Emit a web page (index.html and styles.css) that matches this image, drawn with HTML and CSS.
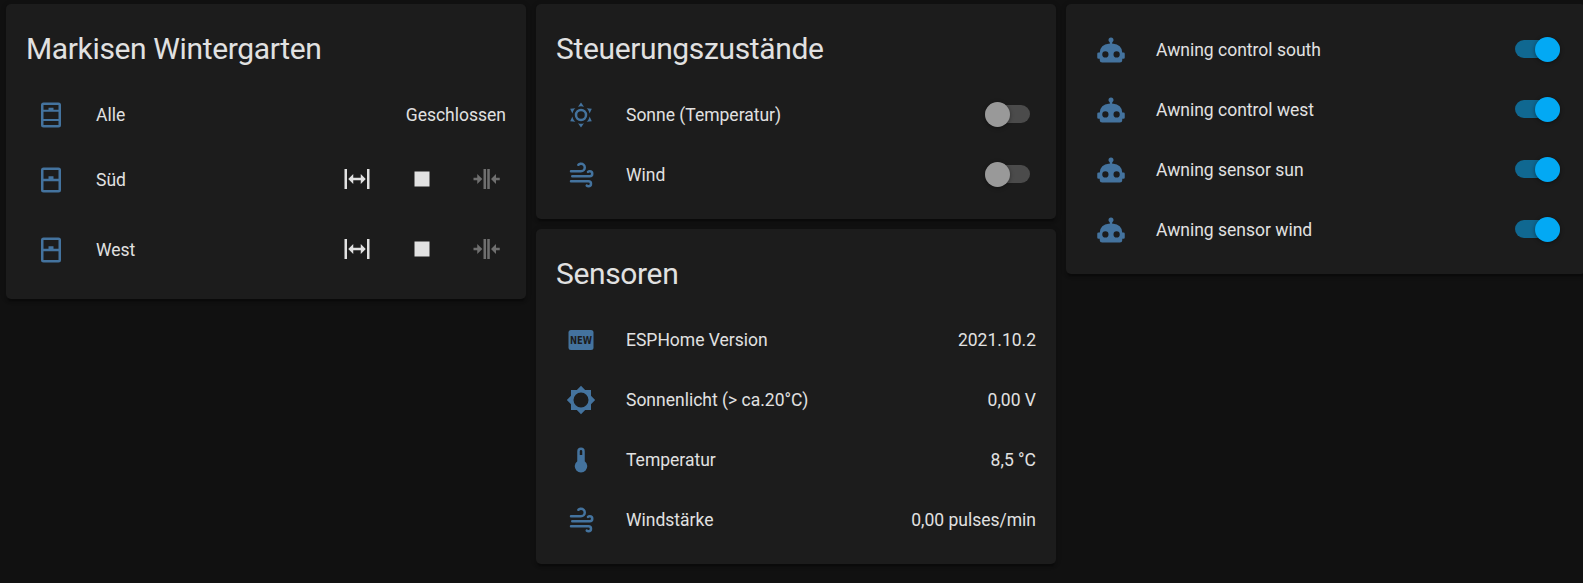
FILE: index.html
```
<!DOCTYPE html>
<html lang="de">
<head>
<meta charset="utf-8">
<title>Markisen</title>
<link rel="stylesheet" href="styles.css">
</head>
<body>
<svg class="defs" aria-hidden="true">
  <symbol id="group" viewBox="0 0 24 24"><path d="M6,2H18A2,2 0 0,1 20,4V20A2,2 0 0,1 18,22H6A2,2 0 0,1 4,20V4A2,2 0 0,1 6,2M6,4V7.7H10V6.2H14V7.7H18V4H6M6,9.3V15.2H18V9.3H6M6,16.8V20H18V16.8H6Z"/></symbol>
  <symbol id="window" viewBox="0 0 24 24"><path d="M6,11H10V9H14V11H18V4H6V11M18,13H6V20H18V13M6,22A2,2 0 0,1 4,20V4A2,2 0 0,1 6,2H18A2,2 0 0,1 20,4V20A2,2 0 0,1 18,22H6Z"/></symbol>
  <symbol id="expand" viewBox="0 0 24 24"><path d="M9,11H15V8L19,12L15,16V13H9V16L5,12L9,8V11M2,20V4H4V20H2M20,20V4H22V20H20Z"/></symbol>
  <symbol id="stop" viewBox="0 0 24 24"><path d="M18,18H6V6H18V18Z"/></symbol>
  <symbol id="collapse" viewBox="0 0 24 24"><path d="M13,20V4H15.03V20H13M10,20V4H12.03V20H10M5,8L9.03,12L5,16V13H2V11H5V8M20,16L16,12L20,8V11H23V13H20V16Z"/></symbol>
  <symbol id="sun" viewBox="0 0 24 24"><path d="M12,7A5,5 0 0,1 17,12A5,5 0 0,1 12,17A5,5 0 0,1 7,12A5,5 0 0,1 12,7M12,9A3,3 0 0,0 9,12A3,3 0 0,0 12,15A3,3 0 0,0 15,12A3,3 0 0,0 12,9M12,2L14.39,5.42C13.65,5.15 12.84,5 12,5C11.16,5 10.35,5.15 9.61,5.42L12,2M3.34,7L7.5,6.65C6.9,7.16 6.36,7.78 5.94,8.5C5.5,9.24 5.25,10 5.11,10.79L3.34,7M3.36,17L5.12,13.23C5.26,14 5.53,14.78 5.95,15.5C6.37,16.24 6.91,16.86 7.5,17.37L3.36,17M20.65,7L18.88,10.79C18.74,10 18.47,9.23 18.05,8.5C17.63,7.78 17.1,7.15 16.5,6.64L20.65,7M20.64,17L16.5,17.36C17.09,16.85 17.62,16.22 18.04,15.5C18.46,14.77 18.73,14 18.87,13.21L20.64,17M12,22L9.59,18.56C10.33,18.83 11.14,19 12,19C12.82,19 13.63,18.83 14.37,18.56L12,22Z"/></symbol>
  <symbol id="wind" viewBox="0 0 24 24"><path d="M4,10A1,1 0 0,1 3,9A1,1 0 0,1 4,8H12A2,2 0 0,0 14,6A2,2 0 0,0 12,4C11.45,4 10.95,4.22 10.59,4.59C10.2,5 9.56,5 9.17,4.59C8.78,4.2 8.78,3.56 9.17,3.17C9.9,2.45 10.9,2 12,2A4,4 0 0,1 16,6A4,4 0 0,1 12,10H4M19,12A1,1 0 0,0 20,11A1,1 0 0,0 19,10C18.72,10 18.47,10.11 18.29,10.29C17.9,10.68 17.27,10.68 16.88,10.29C16.5,9.9 16.5,9.27 16.88,8.88C17.42,8.34 18.17,8 19,8A3,3 0 0,1 22,11A3,3 0 0,1 19,14H5A1,1 0 0,1 4,13A1,1 0 0,1 5,12H19M18,18H4A1,1 0 0,1 3,17A1,1 0 0,1 4,16H18A3,3 0 0,1 21,19A3,3 0 0,1 18,22C17.17,22 16.42,21.66 15.88,21.12C15.5,20.73 15.5,20.1 15.88,19.71C16.27,19.32 16.9,19.32 17.29,19.71C17.47,19.89 17.72,20 18,20A1,1 0 0,0 19,19A1,1 0 0,0 18,18Z"/></symbol>
  <symbol id="brightness" viewBox="0 0 24 24"><path d="M12,18A6,6 0 0,1 6,12A6,6 0 0,1 12,6A6,6 0 0,1 18,12A6,6 0 0,1 12,18M20,15.31L23.31,12L20,8.69V4H15.31L12,0.69L8.69,4H4V8.69L0.69,12L4,15.31V20H8.69L12,23.31L15.31,20H20V15.31Z"/></symbol>
  <symbol id="thermometer" viewBox="0 0 24 24"><path d="M15 13V5A3 3 0 0 0 9 5V13A5 5 0 1 0 15 13M12 4A1 1 0 0 1 13 5V8H11V5A1 1 0 0 1 12 4Z"/></symbol>
  <symbol id="robot" viewBox="0 0 24 24"><path d="M12,2A2,2 0 0,1 14,4C14,4.74 13.6,5.39 13,5.73V7H14A7,7 0 0,1 21,14H22A1,1 0 0,1 23,15V18A1,1 0 0,1 22,19H21V20A2,2 0 0,1 19,22H5A2,2 0 0,1 3,20V19H2A1,1 0 0,1 1,18V15A1,1 0 0,1 2,14H3A7,7 0 0,1 10,7H11V5.73C10.4,5.39 10,4.74 10,4A2,2 0 0,1 12,2M7.5,13A2.5,2.5 0 0,0 5,15.5A2.5,2.5 0 0,0 7.5,18A2.5,2.5 0 0,0 10,15.5A2.5,2.5 0 0,0 7.5,13M16.5,13A2.5,2.5 0 0,0 14,15.5A2.5,2.5 0 0,0 16.5,18A2.5,2.5 0 0,0 19,15.5A2.5,2.5 0 0,0 16.5,13Z"/></symbol>
</svg>

<main class="columns">
  <div class="column">
    <section class="card">
      <h1 class="card-title">Markisen Wintergarten</h1>
      <div class="rows">
        <div class="row">
          <span class="badge"><svg class="icon"><use href="#group"/></svg></span>
          <span class="name">Alle</span>
          <span class="value">Geschlossen</span>
        </div>
        <div class="row row-cover">
          <span class="badge"><svg class="icon"><use href="#window"/></svg></span>
          <span class="name">Süd</span>
          <div class="controls">
            <button class="control" aria-label="Öffnen"><svg class="icon"><use href="#expand"/></svg></button>
            <button class="control" aria-label="Stopp"><svg class="icon"><use href="#stop"/></svg></button>
            <button class="control" aria-label="Schließen" disabled><svg class="icon"><use href="#collapse"/></svg></button>
          </div>
        </div>
        <div class="row row-cover">
          <span class="badge"><svg class="icon"><use href="#window"/></svg></span>
          <span class="name">West</span>
          <div class="controls">
            <button class="control" aria-label="Öffnen"><svg class="icon"><use href="#expand"/></svg></button>
            <button class="control" aria-label="Stopp"><svg class="icon"><use href="#stop"/></svg></button>
            <button class="control" aria-label="Schließen" disabled><svg class="icon"><use href="#collapse"/></svg></button>
          </div>
        </div>
      </div>
    </section>
  </div>

  <div class="column">
    <section class="card">
      <h1 class="card-title">Steuerungszustände</h1>
      <div class="rows">
        <div class="row">
          <span class="badge"><svg class="icon"><use href="#sun"/></svg></span>
          <span class="name">Sonne (Temperatur)</span>
          <span class="toggle"><span class="thumb"></span></span>
        </div>
        <div class="row">
          <span class="badge"><svg class="icon"><use href="#wind"/></svg></span>
          <span class="name">Wind</span>
          <span class="toggle"><span class="thumb"></span></span>
        </div>
      </div>
    </section>

    <section class="card">
      <h1 class="card-title">Sensoren</h1>
      <div class="rows">
        <div class="row">
          <span class="badge"><svg class="icon" viewBox="0 0 24 24"><rect x="2" y="4" width="20" height="16" rx="2"/><text class="new-label" x="3.2" y="15" textLength="17.6" lengthAdjust="spacingAndGlyphs">NEW</text></svg></span>
          <span class="name">ESPHome Version</span>
          <span class="value">2021.10.2</span>
        </div>
        <div class="row">
          <span class="badge"><svg class="icon"><use href="#brightness"/></svg></span>
          <span class="name">Sonnenlicht (&gt; ca.20°C)</span>
          <span class="value">0,00 V</span>
        </div>
        <div class="row">
          <span class="badge"><svg class="icon"><use href="#thermometer"/></svg></span>
          <span class="name">Temperatur</span>
          <span class="value">8,5 °C</span>
        </div>
        <div class="row">
          <span class="badge"><svg class="icon"><use href="#wind"/></svg></span>
          <span class="name">Windstärke</span>
          <span class="value">0,00 pulses/min</span>
        </div>
      </div>
    </section>
  </div>

  <div class="column">
    <section class="card">
      <div class="rows rows-untitled">
        <div class="row">
          <span class="badge"><svg class="icon"><use href="#robot"/></svg></span>
          <span class="name">Awning control south</span>
          <span class="toggle toggle-on"><span class="thumb"></span></span>
        </div>
        <div class="row">
          <span class="badge"><svg class="icon"><use href="#robot"/></svg></span>
          <span class="name">Awning control west</span>
          <span class="toggle toggle-on"><span class="thumb"></span></span>
        </div>
        <div class="row">
          <span class="badge"><svg class="icon"><use href="#robot"/></svg></span>
          <span class="name">Awning sensor sun</span>
          <span class="toggle toggle-on"><span class="thumb"></span></span>
        </div>
        <div class="row">
          <span class="badge"><svg class="icon"><use href="#robot"/></svg></span>
          <span class="name">Awning sensor wind</span>
          <span class="toggle toggle-on"><span class="thumb"></span></span>
        </div>
      </div>
    </section>
  </div>
</main>
</body>
</html>
```

FILE: styles.css
```
* { box-sizing: border-box; }

html { background: #111111; }

body {
  margin: 0;
  height: 583px;
  overflow: hidden;
  background: #111111;
  color: #e1e1e1;
  font-family: Roboto, "Noto Sans", sans-serif;
  font-size: 17.5px;
  line-height: 25px;
}

.defs {
  display: none;
}

.columns {
  display: grid;
  grid-template-columns: repeat(3, 520px);
  gap: 10px;
  align-items: start;
  padding: 4px 6px;
}

.column {
  display: flex;
  flex-direction: column;
  gap: 10px;
}

.card {
  background: #1c1c1c;
  border-radius: 5px;
  box-shadow: 0 2.5px 2.5px 0 rgba(0, 0, 0, 0.14), 0 1px 6px 0 rgba(0, 0, 0, 0.12), 0 4px 1px -2.5px rgba(0, 0, 0, 0.2);
}

.card-title {
  margin: 0;
  padding: 15px 20px 10px;
  font-size: 30px;
  font-weight: 400;
  line-height: 60px;
  letter-spacing: -0.012em;
}

.rows {
  display: flex;
  flex-direction: column;
  gap: 10px;
  padding: 0 20px 20px;
}

.rows-untitled { padding-top: 20px; }

.row {
  display: flex;
  align-items: center;
  height: 50px;
}

.row-cover { height: 60px; }

.badge {
  display: flex;
  align-items: center;
  justify-content: center;
  width: 50px;
  height: 50px;
  padding-top: 2px;
  color: #44739e;
}

.icon {
  display: block;
  width: 30px;
  height: 30px;
  fill: currentColor;
}

.new-label {
  fill: #1c1c1c;
  font-family: "DejaVu Sans", sans-serif;
  font-size: 8.2px;
  font-weight: 700;
}

.name {
  flex: 1;
  padding: 2px 0 0 20px;
}

.value { padding-top: 2px; }

.controls {
  display: flex;
  gap: 4.5px;
  margin-right: -10px;
}

.control {
  width: 60px;
  height: 60px;
  padding: 15px;
  border: 0;
  background: none;
  color: #e1e1e1;
}

.control:disabled { color: #6f6f6f; }

.toggle {
  display: flex;
  align-items: center;
  width: 45px;
  height: 18px;
  margin-right: 6px;
  border-radius: 9px;
  background: #4b4b4b;
}

.thumb {
  width: 25px;
  height: 25px;
  flex: none;
  border-radius: 50%;
  background: #999999;
  box-shadow: 0 1px 4px rgba(0, 0, 0, 0.4);
}

.toggle-on {
  justify-content: flex-end;
  background: #106891;
}

.toggle-on .thumb { background: #03a9f4; }
```
